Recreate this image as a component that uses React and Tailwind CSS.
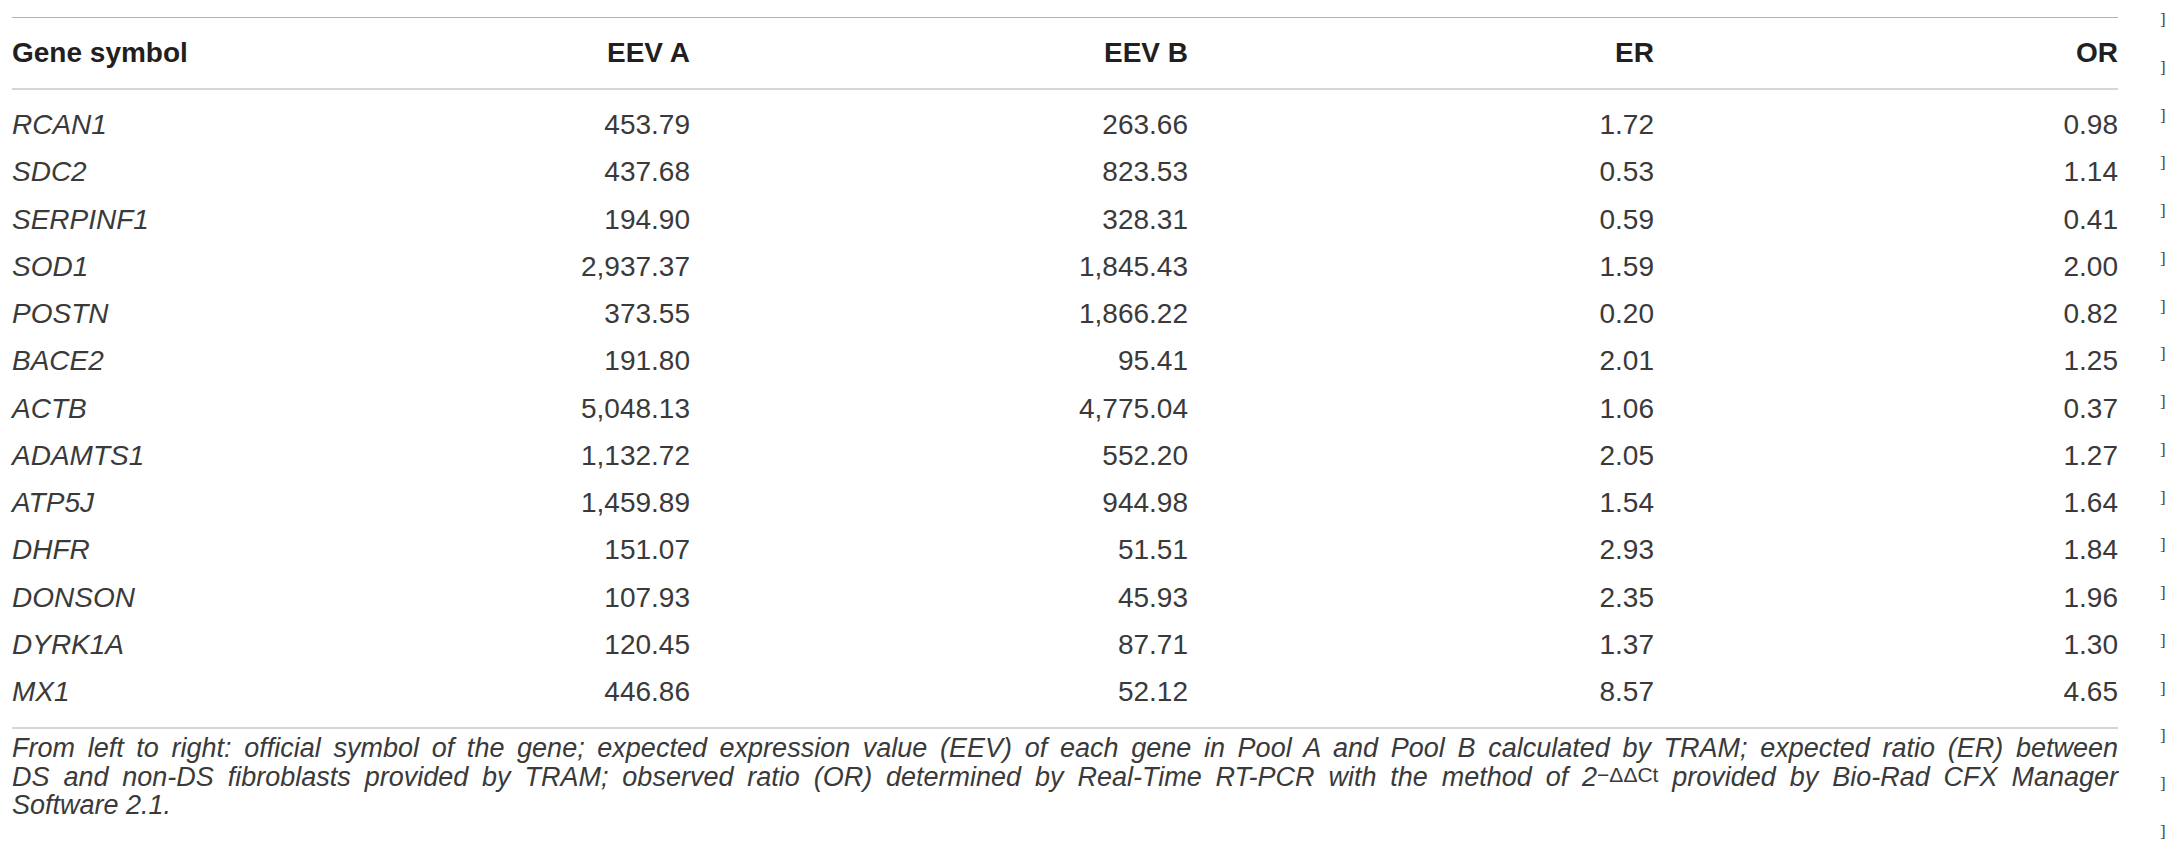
// Table: expected vs observed expression ratios
const rows = [
  ["RCAN1", "453.79", "263.66", "1.72", "0.98"],
  ["SDC2", "437.68", "823.53", "0.53", "1.14"],
  ["SERPINF1", "194.90", "328.31", "0.59", "0.41"],
  ["SOD1", "2,937.37", "1,845.43", "1.59", "2.00"],
  ["POSTN", "373.55", "1,866.22", "0.20", "0.82"],
  ["BACE2", "191.80", "95.41", "2.01", "1.25"],
  ["ACTB", "5,048.13", "4,775.04", "1.06", "0.37"],
  ["ADAMTS1", "1,132.72", "552.20", "2.05", "1.27"],
  ["ATP5J", "1,459.89", "944.98", "1.54", "1.64"],
  ["DHFR", "151.07", "51.51", "2.93", "1.84"],
  ["DONSON", "107.93", "45.93", "2.35", "1.96"],
  ["DYRK1A", "120.45", "87.71", "1.37", "1.30"],
  ["MX1", "446.86", "52.12", "8.57", "4.65"],
];

const cols = "grid grid-cols-[300px_378px_498px_466px_464px]";

export default function App() {
  return (
    <div className="flex items-start bg-white min-h-[852px] w-[2179px] font-['Liberation_Sans',Arial,sans-serif]">
      <div className="pt-[17px] pl-[12px] w-[2118px]">
        <div className="w-[2106px]">
          <div className="h-px bg-[#b3b3b3]" />

          {/* header */}
          <div className={`${cols} h-[70px] items-center text-[28px] font-bold text-[#231f20]`}>
            <div>Gene symbol</div>
            <div className="text-right">EEV A</div>
            <div className="text-right">EEV B</div>
            <div className="text-right">ER</div>
            <div className="text-right">OR</div>
          </div>
          <div className="h-[2px] bg-[#d6d6d6]" />

          {/* body */}
          <div className="pt-[11px] pb-[12px] text-[28px] text-[#3a3a3a]">
            {rows.map((r) => (
              <div key={r[0]} className={`${cols} h-[47.25px] items-center leading-[47.25px]`}>
                <div className="italic">{r[0]}</div>
                <div className="text-right">{r[1]}</div>
                <div className="text-right">{r[2]}</div>
                <div className="text-right">{r[3]}</div>
                <div className="text-right">{r[4]}</div>
              </div>
            ))}
          </div>
          <div className="h-[2px] bg-[#d6d6d6]" />

          {/* caption */}
          <div className="pt-[5px] text-[27px] leading-[28.5px] italic text-[#3a3a3a]">
            <div className="text-justify [text-align-last:justify] whitespace-nowrap">
              From left to right: official symbol of the gene; expected expression value (EEV) of each gene in Pool A and Pool B calculated by TRAM; expected ratio (ER) between
            </div>
            <div className="text-justify [text-align-last:justify] whitespace-nowrap">
              DS and non-DS fibroblasts provided by TRAM; observed ratio (OR) determined by Real-Time RT-PCR with the method of 2
              <sup className="not-italic text-[21px] relative -top-[4px]">−ΔΔCt</sup> provided by Bio-Rad CFX Manager
            </div>
            <div>Software 2.1.</div>
          </div>
        </div>
      </div>

      {/* margin markers */}
      <div className="ml-[42px] -mt-[4px] flex flex-col text-[17px] text-[#444] font-['Liberation_Serif',serif]">
        {Array.from({ length: 18 }).map((_, i) => (
          <div key={i} className="h-[47.75px] flex items-center">]</div>
        ))}
      </div>
    </div>
  );
}
